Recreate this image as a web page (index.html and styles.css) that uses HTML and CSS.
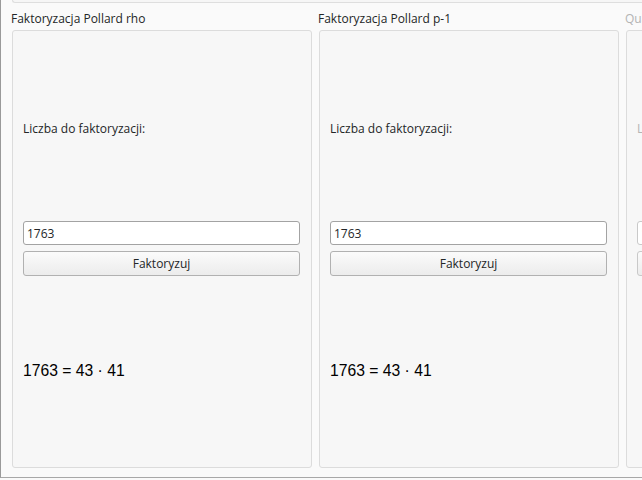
FILE: index.html
```html
<!DOCTYPE html>
<html lang="pl">
<head>
<meta charset="utf-8">
<title>Faktoryzacja</title>
<link rel="stylesheet" href="styles.css">
</head>
<body>
<div class="window">
  <div class="topframe"></div>
  <div class="columns">
    <section class="group">
      <div class="group-title">Faktoryzacja Pollard rho</div>
      <div class="group-box">
        <div class="label">Liczba do faktoryzacji:</div>
        <div class="input">1763</div>
        <div class="button">Faktoryzuj</div>
        <div class="result">1763 = 43 · 41</div>
      </div>
    </section>
    <section class="group">
      <div class="group-title">Faktoryzacja Pollard p-1</div>
      <div class="group-box">
        <div class="label">Liczba do faktoryzacji:</div>
        <div class="input">1763</div>
        <div class="button">Faktoryzuj</div>
        <div class="result">1763 = 43 · 41</div>
      </div>
    </section>
    <section class="group disabled">
      <div class="group-title">Quadratic sieve</div>
      <div class="group-box">
        <div class="label">Liczba do faktoryzacji:</div>
        <div class="input">1763</div>
        <div class="button">Faktoryzuj</div>
        <div class="result">&nbsp;</div>
      </div>
    </section>
  </div>
</div>
</body>
</html>
```

FILE: styles.css
```css
html, body {
  margin: 0;
  padding: 0;
  background: #fafafa;
}

.window {
  width: 642px;
  height: 478px;
  box-sizing: border-box;
  border-left: 1px solid #9a9a9a;
  border-bottom: 1px solid #a8a8a8;
  background: #fafafa;
  overflow: hidden;
  font-family: "Open Sans", "Noto Sans", sans-serif;
  font-size: 12px;
  color: #232627;
}

.topframe {
  margin-left: 11px;
  height: 2px;
  border: 1px solid #dedede;
  border-top: none;
  border-right: none;
  border-bottom-left-radius: 3px;
  background: #f6f6f6;
}

.columns {
  display: flex;
  gap: 6px;
  padding-left: 10px;
  padding-top: 8px;
}

.group {
  flex: 0 0 301px;
  display: flex;
  flex-direction: column;
}

.group-title {
  height: 19px;
  line-height: 16px;
  white-space: nowrap;
}

.group-box {
  margin-left: 1px;
  height: 438px;
  box-sizing: border-box;
  border: 1px solid #dcdcdc;
  border-radius: 3px;
  background: #f7f7f7;
  display: flex;
  flex-direction: column;
  padding: 0 11px 0 10px;
}

.label {
  margin-top: 90px;
  line-height: 16px;
  white-space: nowrap;
}

.input {
  margin-top: 84px;
  height: 24px;
  box-sizing: border-box;
  border: 1px solid #a3a3a3;
  border-radius: 3px;
  background: #ffffff;
  padding-left: 3px;
  line-height: 23px;
}

.button {
  margin-top: 6px;
  height: 25px;
  box-sizing: border-box;
  border: 1px solid #b1b1b1;
  border-radius: 3px;
  background: linear-gradient(#fbfbfb, #ececec);
  text-align: center;
  line-height: 24px;
}

.result {
  margin-top: 86px;
  font-family: "Liberation Sans", Arial, sans-serif;
  font-size: 15.7px;
  line-height: 18px;
  color: #000;
}

.disabled .group-title,
.disabled .label,
.disabled .input,
.disabled .button {
  color: #b4b4b4;
}

.disabled .input,
.disabled .button {
  border-color: #c9c9c9;
}
```
